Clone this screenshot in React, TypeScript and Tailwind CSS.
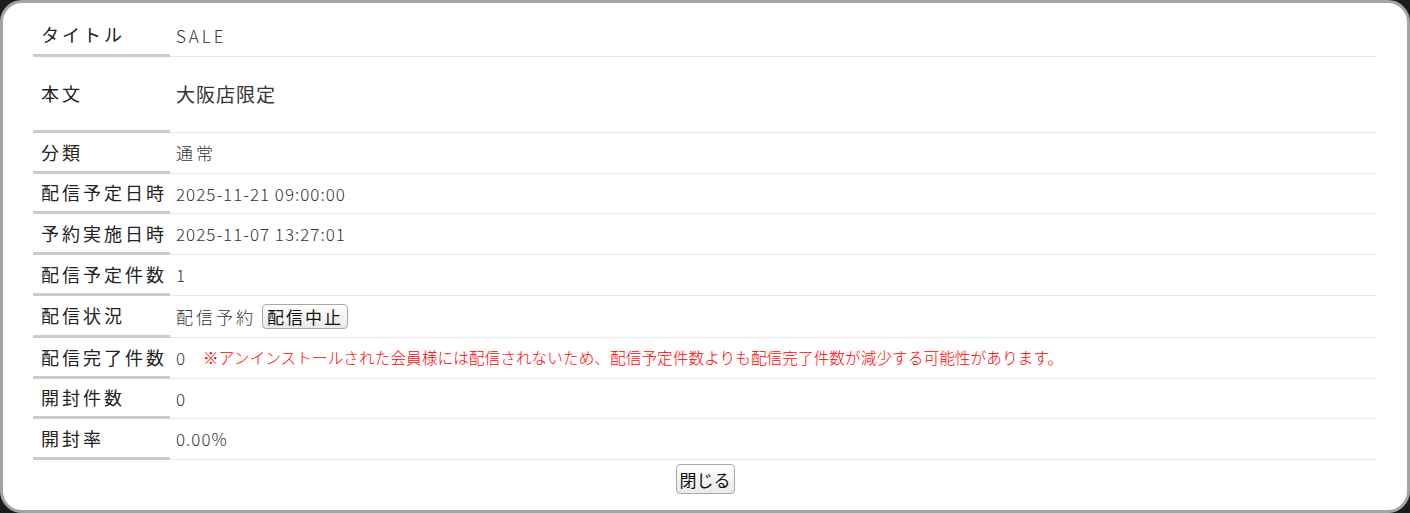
const jp = "font-['Noto_Sans_CJK_JP','Noto_Sans',sans-serif]";

type Row = { label: string; h: string; value: React.ReactNode };

function Btn({ children, className = "" }: { children: React.ReactNode; className?: string }) {
  return (
    <button
      className={`rounded-[4px] border border-[#a9a9a9] bg-gradient-to-b from-white to-[#e9e9e9] text-[#111] leading-none ${className}`}
    >
      {children}
    </button>
  );
}

const num = "text-[17px] tracking-[1px] font-light";
const kana = "text-[17px] tracking-[3px] font-light";

const rows: Row[] = [
  { label: "タイトル", h: "h-[42px]", value: <span className="tracking-[3px] text-[17px] font-light">SALE</span> },
  { label: "本文", h: "h-[76px]", value: <span className="text-[19px] tracking-[1px]">大阪店限定</span> },
  { label: "分類", h: "h-[41px]", value: <span className={kana}>通常</span> },
  { label: "配信予定日時", h: "h-[40px]", value: <span className={num}>2025-11-21 09:00:00</span> },
  { label: "予約実施日時", h: "h-[41px]", value: <span className={num}>2025-11-07 13:27:01</span> },
  { label: "配信予定件数", h: "h-[41px]", value: <span className={num}>1</span> },
  {
    label: "配信状況",
    h: "h-[42px]",
    value: (
      <span className="flex items-center gap-[6px]">
        <span className={kana}>配信予約</span>
        <Btn className="h-[25px] px-[4px] text-[17px] tracking-[2px]">配信中止</Btn>
      </span>
    ),
  },
  {
    label: "配信完了件数",
    h: "h-[41px]",
    value: (
      <span className="flex items-center">
        <span className={num}>0</span>
        <span className="ml-[17px] text-[15.7px] text-[#ff0000] font-light">
          ※アンインストールされた会員様には配信されないため、配信予定件数よりも配信完了件数が減少する可能性があります。
        </span>
      </span>
    ),
  },
  { label: "開封件数", h: "h-[40px]", value: <span className={num}>0</span> },
  { label: "開封率", h: "h-[41px]", value: <span className={num}>0.00%</span> },
];

export default function App() {
  return (
    <div className={`h-[513px] w-[1410px] bg-[#1c1c1c] ${jp}`}>
      <div className="h-full rounded-[22px] border-[3px] border-[#a4a4a4] bg-white px-[30px] pt-[12px]">
        <table className="w-full border-separate border-spacing-0">
          <tbody>
            {rows.map((r) => (
              <tr key={r.label} className={r.h}>
                <th className="w-[137px] border-b-[3px] border-[#cccccc] pl-[8px] text-left align-middle text-[18px] font-normal tracking-[3px] text-[#222] whitespace-nowrap">
                  {r.label}
                </th>
                <td className="border-b border-[#e8e8e8] pl-[6px] align-middle text-[16px] text-[#333]">
                  {r.value}
                </td>
              </tr>
            ))}
          </tbody>
        </table>
        <div className="mt-[4px] flex justify-center">
          <Btn className="h-[30px] w-[59px] text-[17px]">閉じる</Btn>
        </div>
      </div>
    </div>
  );
}
